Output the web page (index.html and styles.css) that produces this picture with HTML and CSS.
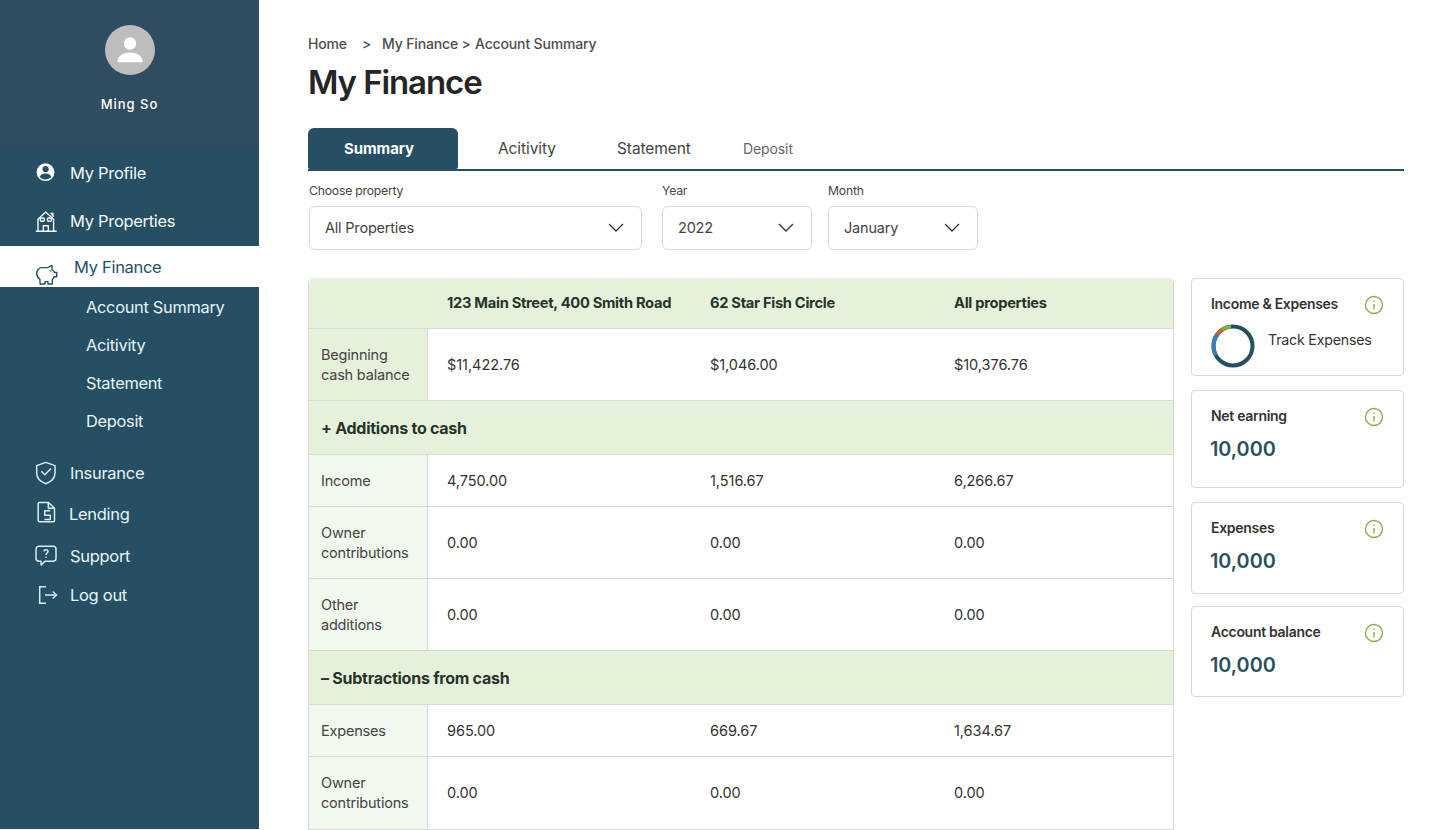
FILE: index.html
```html
<!DOCTYPE html>
<html lang="en">
<head>
<meta charset="utf-8">
<title>My Finance</title>
<link rel="stylesheet" href="styles.css">
</head>
<body>
<div class="page">
  <aside class="sidebar">
    <div class="user">
      <svg class="avatar" viewBox="0 0 50 50"><circle cx="25" cy="25" r="25" fill="#bdbdbd"/><circle cx="25" cy="18.500" r="6.200" fill="#fff"/><path d="M12.500 36.500c0-6 6.500-9 12.500-9s12.500 3 12.500 9c0 .5-.5.8-1 .8H13.500c-.5 0-1-.3-1-.8z" fill="#fff"/></svg>
      <div class="user-name">Ming So</div>
    </div>
    <nav class="nav">
      <a class="nav-item h48"><svg class="ico" viewBox="0 0 24 24"><circle cx="11.500" cy="11.200" r="8.900" fill="#fff"/><circle cx="11.600" cy="8" r="3.100" fill="#264f63"/><path d="M5.700 15.800c1-2.200 3.300-3.200 5.800-3.200s4.800 1 5.800 3.200c-1.400 1.700-3.500 2.800-5.800 2.800s-4.400-1.100-5.800-2.800z" fill="#264f63"/></svg><span>My Profile</span></a>
      <a class="nav-item h48"><svg class="ico" viewBox="0 0 24 24" fill="none" stroke="#f4f9fb" stroke-width="1.400" stroke-linejoin="round"><path d="M4 22V10.300L11.700 3l7.900 7.300V22M1.800 22.200h20.900"/><path d="M16.800 4.200h2.400v3.600z" fill="#f4f9fb" stroke-width="1"/><rect x="6.300" y="9" width="4" height="3.300" rx="1"/><rect x="13.500" y="9" width="4" height="3.300" rx="1"/><path d="M9.300 22v-5.300h5V22"/></svg><span>My Properties</span></a>
      <a class="nav-item active"><svg class="ico piggy" viewBox="0 0 24 24" fill="none" stroke="#264f63" stroke-width="1.400" stroke-linejoin="round"><path d="M8 5.600h5c1.500 0 3-1.500 5-2.200v4.300c1.200.7 2 1.700 2.400 2.800h2.300v4.200h-2.500c-.4 1-1 1.900-1.900 2.700V22h-4.300v-2.400h-3V22H6v-4.500c-2-1.500-3.300-3.500-3.300-6 0-3.500 2.500-5.900 5.300-5.900z"/><circle cx="16.700" cy="9" r=".7" fill="#264f63" stroke="none"/></svg><span>My Finance</span></a>
      <div class="subnav">
        <a class="sub-item">Account Summary</a>
        <a class="sub-item">Acitivity</a>
        <a class="sub-item">Statement</a>
        <a class="sub-item">Deposit</a>
      </div>
      <a class="nav-item h41"><svg class="ico" viewBox="0 0 24 24" fill="none" stroke="#d8ecf4" stroke-width="1.500" stroke-linejoin="round"><path d="M11.800 1.400 21 4.600V12c0 5.300-4.500 9-9.200 10.800C7.200 21 2.700 17.300 2.700 12V4.600z"/><path d="m7.300 10.300 3.500 3.500 6.200-6.300"/></svg><span>Insurance</span></a>
      <a class="nav-item h41 lend"><svg class="ico" viewBox="0 0 24 24" fill="none" stroke="#d8ecf4" stroke-width="1.500" stroke-linejoin="round"><path d="M5.500.5h9l6 5.700V18.500a1.300 1.300 0 0 1-1.300 1.300H5.500a1.300 1.300 0 0 1-1.300-1.300V1.800A1.300 1.300 0 0 1 5.500.5z"/><path d="M14.300.5v5.700h6.200"/><path d="M16.300 8.800h-5.600v4.400h5.600v4.400h-5.800"/></svg><span>Lending</span></a>
      <a class="nav-item h41 sup"><svg class="ico" viewBox="0 0 24 24" fill="none" stroke="#d8ecf4" stroke-width="1.500" stroke-linejoin="round"><path d="M5 2.200h14a3 3 0 0 1 3 3v9a3 3 0 0 1-3 3h-8l-3.800 3.800-.2-3.800H5a3 3 0 0 1-3-3v-9a3 3 0 0 1 3-3z"/><path d="M10 7.500c0-2.500 4-2.500 4 0 0 1.500-2 1.500-2 3.500M12 12.400v1.400"/></svg><span>Support</span></a>
      <a class="nav-item h38"><svg class="ico" viewBox="0 0 24 24" fill="none" stroke="#d8ecf4" stroke-width="1.500"><path d="M12 3.700H5.700v16.600H12M11 12h11.500M18.700 8.500l3.800 3.500-3.800 3.500"/></svg><span>Log out</span></a>
    </nav>
  </aside>

  <main class="main">
    <div class="crumbs"><span class="crumb-home">Home</span><span class="crumb-sep">&gt;</span><span class="crumb-mid">My Finance &gt;</span><span>Account Summary</span></div>
    <h1 class="title">My Finance</h1>

    <div class="tabs">
      <div class="tab tab-active">Summary</div>
      <div class="tab tab-a">Acitivity</div>
      <div class="tab tab-s">Statement</div>
      <div class="tab tab-d">Deposit</div>
    </div>

    <div class="filters">
      <label class="field f-prop"><span class="field-label">Choose property</span><span class="select">All Properties<svg class="chev" viewBox="0 0 16 9"><path d="M1 1l7 7 7-7"/></svg></span></label>
      <label class="field f-year"><span class="field-label">Year</span><span class="select">2022<svg class="chev" viewBox="0 0 16 9"><path d="M1 1l7 7 7-7"/></svg></span></label>
      <label class="field f-month"><span class="field-label">Month</span><span class="select">January<svg class="chev" viewBox="0 0 16 9"><path d="M1 1l7 7 7-7"/></svg></span></label>
    </div>

    <div class="content">
      <div class="table">
        <div class="row r-head"><div class="c-label"></div><div class="c">123 Main Street, 400 Smith Road</div><div class="c">62 Star Fish Circle</div><div class="c">All properties</div></div>
        <div class="row r-tall"><div class="c-label">Beginning cash balance</div><div class="c">$11,422.76</div><div class="c">$1,046.00</div><div class="c">$10,376.76</div></div>
        <div class="r-sec">+ Additions to cash</div>
        <div class="row r-short light"><div class="c-label">Income</div><div class="c">4,750.00</div><div class="c">1,516.67</div><div class="c">6,266.67</div></div>
        <div class="row r-tall light"><div class="c-label">Owner contributions</div><div class="c">0.00</div><div class="c">0.00</div><div class="c">0.00</div></div>
        <div class="row r-tall light"><div class="c-label">Other<br>additions</div><div class="c">0.00</div><div class="c">0.00</div><div class="c">0.00</div></div>
        <div class="r-sec">– Subtractions from cash</div>
        <div class="row r-short light"><div class="c-label">Expenses</div><div class="c">965.00</div><div class="c">669.67</div><div class="c">1,634.67</div></div>
        <div class="row r-tall light last"><div class="c-label">Owner contributions</div><div class="c">0.00</div><div class="c">0.00</div><div class="c">0.00</div></div>
      </div>

      <div class="cards">
        <section class="card c1">
          <div class="card-top"><h2 class="card-title">Income &amp; Expenses</h2><svg class="info" viewBox="0 0 20 20"><circle cx="10" cy="10" r="8.500"/><path d="M10 9v5.500M10 5.500v1.500"/></svg></div>
          <div class="track">
            <svg class="donut" viewBox="0 0 44 44" fill="none" stroke-width="4"><circle cx="22" cy="22" r="19.500" stroke="#264f63"/><path d="M4.800 31.200A19.500 19.500 0 0 1 6.400 10.300" stroke="#3a7db5"/><path d="M6.400 10.300A19.500 19.500 0 0 1 11.200 5.800" stroke="#d0652b"/><path d="M11.200 5.800A19.500 19.500 0 0 1 20 2.600" stroke="#86ad44"/></svg>
            <span class="track-text">Track Expenses</span>
          </div>
        </section>
        <section class="card c2">
          <div class="card-top"><h2 class="card-title">Net earning</h2><svg class="info" viewBox="0 0 20 20"><circle cx="10" cy="10" r="8.500"/><path d="M10 9v5.500M10 5.500v1.500"/></svg></div>
          <div class="card-value">10,000</div>
        </section>
        <section class="card c3">
          <div class="card-top"><h2 class="card-title">Expenses</h2><svg class="info" viewBox="0 0 20 20"><circle cx="10" cy="10" r="8.500"/><path d="M10 9v5.500M10 5.500v1.500"/></svg></div>
          <div class="card-value">10,000</div>
        </section>
        <section class="card c4">
          <div class="card-top"><h2 class="card-title">Account balance</h2><svg class="info" viewBox="0 0 20 20"><circle cx="10" cy="10" r="8.500"/><path d="M10 9v5.500M10 5.500v1.500"/></svg></div>
          <div class="card-value">10,000</div>
        </section>
      </div>
    </div>
  </main>
</div>
</body>
</html>
```
FILE: styles.css
```css
* { box-sizing: border-box; }
html, body { margin: 0; height: 830px; overflow: hidden; background: #fff; }
body { font-family: Inter, "Liberation Sans", sans-serif; color: #333; font-size: 15px; letter-spacing: -0.2px; }
.page { display: flex; height: 830px; }

.sidebar { width: 259px; height: 829px; flex: none; background: #264f63; color: #fff; }
.user { height: 150px; background: #2f4c61; display: flex; flex-direction: column; align-items: center; padding-top: 25px; }
.avatar { width: 50px; height: 50px; }
.user-name { margin-top: 20px; font-size: 13px; font-weight: 500; letter-spacing: 1px; line-height: 18px; }
.nav-item { display: flex; align-items: center; gap: 12px; padding-left: 34px; font-size: 16.500px; letter-spacing: -0.3px; color: #e6f3f8; }
.ico { width: 24px; height: 24px; flex: none; overflow: visible; }
.h48 { height: 48px; padding-bottom: 2px; color: #f4f9fb; }
.h41 { height: 41px; }
.h38 { height: 38px; }
.active { height: 41px; background: #fff; color: #264f63; gap: 16px; }
.active .piggy { margin-top: 15px; }
.subnav { padding: 1px 0 12px 86px; }
.sub-item { display: block; height: 38px; line-height: 38px; font-size: 16.400px; letter-spacing: -0.3px; color: #e6f3f8; }
.lend { gap: 11px; }
.sup { margin-top: 1px; }

.main { flex: 1; padding: 34px 36px 0 49px; min-width: 0; }
.crumbs { display: flex; font-size: 14px; font-weight: 500; line-height: 20px; color: #4d4d4d; letter-spacing: -0.15px; }
.crumb-home { width: 54px; }
.crumb-sep { width: 20px; }
.crumb-mid { width: 93px; }
.title { margin: 6px 0 0; font-size: 33px; line-height: 44px; font-weight: 600; color: #252525; letter-spacing: -1.1px; }

.tabs { display: flex; height: 43px; margin-top: 24px; border-bottom: 2px solid #264f63; }
.tab { height: 41px; line-height: 41px; font-size: 15.500px; letter-spacing: -0.1px; color: #444; }
.tab-active { width: 150px; background: #264f63; color: #fff; font-size: 15px; font-weight: 700; text-align: center; border-radius: 6px 6px 2px 2px; padding-right: 8px; }
.tab-a { margin-left: 40px; width: 119px; }
.tab-s { width: 126px; }
.tab-d { font-size: 14px; color: #666; }

.filters { display: flex; margin-top: 12px; padding-left: 1px; }
.field { display: block; }
.field-label { display: block; font-size: 12.200px; line-height: 16px; color: #444; height: 23px; }
.select { display: flex; align-items: center; justify-content: space-between; height: 44px; padding: 0 16px 1px 15px; border: 1px solid #d5d9da; border-radius: 6px; font-size: 14.500px; color: #444; }
.f-prop { width: 333px; margin-right: 20px; }
.f-year { width: 150px; margin-right: 16px; }
.f-month { width: 150px; }
.chev { width: 16px; height: 9px; fill: none; stroke: #333; stroke-width: 1.300; margin-right: 1px; }

.content { display: flex; margin-top: 28px; align-items: flex-start; }
.table { width: 866px; flex: none; border: 1px solid #d5dcd8; border-top: 0; border-radius: 6px 6px 0 0; overflow: hidden; }
.row { display: grid; grid-template-columns: 119px 263px 244px 1fr; border-bottom: 1px solid #d5dcd8; align-items: stretch; }
.c-label { display: flex; align-items: center; padding: 0 12px; background: #e6f1dc; border-right: 1px solid #d5dcd8; font-size: 14.500px; line-height: 20px; color: #444; }
.light .c-label { background: #f1f8ee; }
.c { display: flex; align-items: center; padding-left: 19px; font-size: 14.500px; letter-spacing: -0.05px; color: #333; }
.r-head { height: 51px; background: #e6f1dc; }
.r-head .c-label { border-right: 0; }
.r-head .c { font-size: 14.700px; font-weight: 700; color: #26352a; letter-spacing: -0.3px; white-space: nowrap; padding-bottom: 1px; }
.r-tall { height: 72px; }
.r-short { height: 52px; }
.r-sec { display: flex; align-items: center; height: 54px; padding-left: 12px; background: #e6f1dc; border-bottom: 1px solid #d5dcd8; font-size: 16px; font-weight: 700; color: #26352a; letter-spacing: -0.25px; }
.last { height: 73px; }
.last .c { padding-bottom: 1px; }

.cards { flex: 1; margin-left: 17px; }
.card { border: 1px solid #d5d9da; border-radius: 4px; padding: 0 19px; }
.c1 { height: 98px; margin-bottom: 14px; }
.c2 { height: 98px; margin-bottom: 14px; }
.c3 { height: 92px; margin-bottom: 12px; }
.c4 { height: 91px; }
.card-top { display: flex; align-items: center; justify-content: space-between; padding-top: 16px; height: 36px; }
.card-title { margin: 0 0 4px; font-size: 14px; font-weight: 600; color: #333; letter-spacing: -0.3px; }
.info { width: 20px; height: 20px; fill: none; stroke: #8ab04f; stroke-width: 1.400; }
.track { display: flex; margin-top: 9px; }
.donut { width: 44px; height: 44px; flex: none; }
.track-text { margin-left: 13px; margin-top: 4px; font-size: 14.200px; line-height: 24px; color: #333; }
.card-value { margin-top: 10px; margin-left: -1px; font-size: 19.800px; font-weight: 600; color: #2a4f5e; line-height: 24px; letter-spacing: 0; }
```
